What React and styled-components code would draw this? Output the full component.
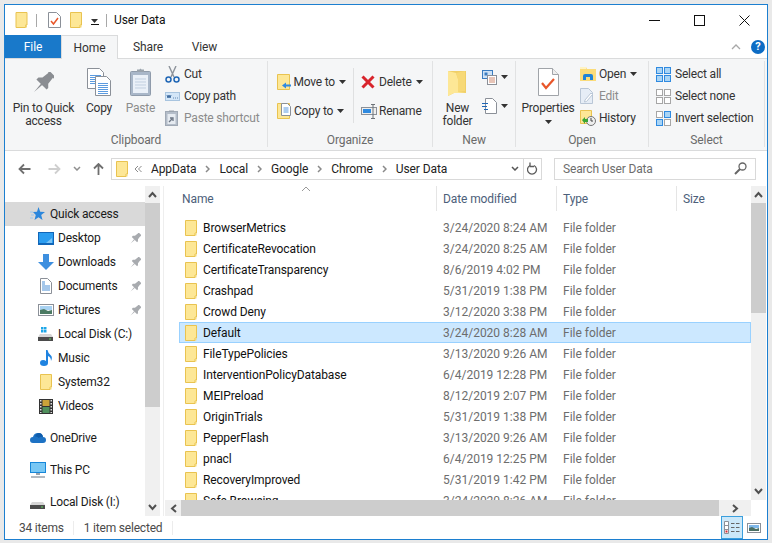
import React from 'react';
import styled, { createGlobalStyle } from 'styled-components';

const GlobalStyle = createGlobalStyle`
  html, body { margin: 0; padding: 0; background: #e9e9e9; }
  body { font-family: Roboto, "Liberation Sans", sans-serif; font-size: 12px; letter-spacing: -0.1px; color: #1a1a1a; }
  * { box-sizing: border-box; }
`;

const Svg = ({ w, h, vb, children }) => (
  <svg width={w} height={h} viewBox={vb || `0 0 ${w} ${h}`} style={{ display: 'block', flex: 'none' }}>
    {children}
  </svg>
);

const Folder = ({ w = 12, h = 16 }) => (
  <Svg w={w} h={h} vb="0 0 12 16">
    <path d="M.5.5h11v12.5H10v2.5H.5z" fill="#fde796" stroke="#e9c350" />
    <path d="M10 13h1.5v2.5H10z" fill="#f3d777" />
  </Svg>
);

const Caret = () => (
  <Svg w={7} h={4}>
    <path d="M0 0h7L3.5 4z" fill="#333" />
  </Svg>
);

const Pushpin = ({ size, color }) => (
  <Svg w={size} h={size} vb="0 0 22 22">
    <g transform="rotate(45 11 11)" fill={color}>
      <path d="M6 -2h10v2.500h-1.500l1 8 3 3v2.500H3.500V11l3-3 1-8H6z" />
      <path d="M10 13.500h2L11 25z" />
    </g>
  </Svg>
);

const Page = ({ x, y, w = 16, h = 20, lines = 5 }) => (
  <g>
    <path d={`M${x + .5} ${y + .5}h${w - 5}l4 4v${h - 5}h-${w - 1}z`} fill="#fff" stroke="#8b9098" />
    {Array.from({ length: lines }).map((_, i) => (
      <path key={i} d={`M${x + 3} ${y + 7.5 + i * 2}h${w - 6}`} stroke="#5b9be0" />
    ))}
  </g>
);

const CopyBig = () => (
  <Svg w={24} h={28}>
    <Page x={0} y={0} w={17} h={21} />
    <Page x={8} y={8} w={16} h={20} lines={6} />
  </Svg>
);

const PasteBig = () => (
  <Svg w={21} h={28}>
    <rect x=".5" y="3.5" width="20" height="24" rx="1" fill="#a9b7c9" stroke="#8f9bab" />
    <rect x="3" y="7" width="15" height="18" fill="#eaf0f8" />
    <path d="M5 11h11M5 14h11M5 17h11M5 20h11" stroke="#c1cfe0" />
    <path d="M7 4V1.5h2.5L10.500.5l1 1H14V4z" fill="#9aa3ad" />
  </Svg>
);

const Scissors = () => (
  <Svg w={15} h={17}>
    <path d="M4 0l5 11M11 0L6 11" stroke="#8d939b" strokeWidth="1.4" fill="none" />
    <circle cx="3.500" cy="13.500" r="2.500" fill="none" stroke="#1f66b5" strokeWidth="1.5" />
    <circle cx="11.500" cy="13.500" r="2.500" fill="none" stroke="#1f66b5" strokeWidth="1.5" />
  </Svg>
);

const CopyPath = () => (
  <Svg w={15} h={9}>
    <rect x=".5" y=".5" width="14" height="8" fill="#d3e6f8" stroke="#a8c4df" />
    <path d="M2 3l1 3 1-3 1 3 1-3M8 6h.8M10 6h.8M12 6h.8" stroke="#1d4f8a" strokeWidth=".8" fill="none" />
  </Svg>
);

const PasteShortcut = () => (
  <Svg w={13} h={16}>
    <rect x=".5" y="1.500" width="12" height="14" fill="#b4bdc9" stroke="#a0a9b5" />
    <rect x="2.500" y="4" width="8" height="10" fill="#e6ebf1" />
    <path d="M4 12l3-3M5 8h3v3" stroke="#6c7684" strokeWidth="1.3" fill="none" />
    <path d="M4 2V.5h5V2z" fill="#9aa3ad" />
  </Svg>
);

const MoveTo = () => (
  <Svg w={14} h={16}>
    <path d="M.5.5h12v15H.5z" fill="#fde796" stroke="#e9c350" />
    <path d="M5 11.500l4-3v2h5v2H9v2z" fill="#2f8ae0" />
  </Svg>
);

const CopyTo = () => (
  <Svg w={14} h={16}>
    <path d="M.5.5h12v15H.5z" fill="#fde796" stroke="#e9c350" />
    <path d="M4.500.5h6l3 3v9h-9z" fill="#fff" stroke="#8b9098" />
    <path d="M6.500 5h5M6.500 7h5M6.500 9h5" stroke="#5b9be0" />
  </Svg>
);

const DeleteX = () => (
  <Svg w={14} h={14}>
    <path d="M1.500 1.500l11 11M12.500 1.500l-11 11" stroke="#d8242c" strokeWidth="3" />
  </Svg>
);

const Rename = () => (
  <Svg w={16} h={15}>
    <rect x=".5" y="3.500" width="15" height="7" fill="#eee" stroke="#8b9098" />
    <rect x="2" y="5" width="8" height="4" fill="#2f8ae0" />
    <path d="M12 .5v14M10 .5h4M10 14.500h4" stroke="#6d7278" />
  </Svg>
);

const NewFolderBig = () => (
  <Svg w={19} h={27}>
    <path d="M0 1h18v22H6l-6 3z" fill="#f0cf68" />
    <path d="M0 1l8 2 2 6v13l8 1H6l-6 3z" fill="#fde796" />
    <path d="M8 3l9-2v20l-7 1V9z" fill="#f7d977" />
  </Svg>
);

const NewItem = () => (
  <Svg w={15} h={15}>
    <rect x=".5" y=".5" width="10" height="8" fill="#cfe2f6" stroke="#3a7cc0" />
    <rect x="2.500" y="2.500" width="3" height="3" fill="#3a7cc0" />
    <rect x="5.500" y="5.500" width="9" height="9" fill="#fff" stroke="#8b9098" />
    <path d="M7 8h6M7 10h6M7 12h6" stroke="#d08a70" />
  </Svg>
);

const EasyAccess = () => (
  <Svg w={15} h={16}>
    <path d="M3.500.5h7l4 4v11h-11z" fill="#fff" stroke="#8b9098" />
    <path d="M0 5.500h6M0 8.500h5M2 11.500h4" stroke="#1f66b5" />
  </Svg>
);

const PropertiesBig = () => (
  <Svg w={21} h={28}>
    <path d="M.5.500h14l6 6v21H.5z" fill="#fff" stroke="#a0a4a9" />
    <path d="M14.500.500v6h6" fill="#eee" stroke="#a0a4a9" />
    <path d="M4 15l4 5 8-9" stroke="#e8562a" strokeWidth="2.200" fill="none" />
  </Svg>
);

const OpenIcon = () => (
  <Svg w={16} h={14}>
    <path d="M0 0h6l1 2h9v12H0z" fill="#fbdc7a" />
    <path d="M0 0h6v2H0z" fill="#fff3c4" />
    <path d="M3 13V9q0-2 2-2h6q2 0 2 2v4h-3v-3H6v3z" fill="#1f83d8" />
  </Svg>
);

const EditIcon = () => (
  <Svg w={13} h={16}>
    <path d="M.5.500h8l4 4v11H.5z" fill="#e6edf6" stroke="#b9c6d6" />
    <path d="M5 12l6-7 1.500 1.500-6 7-2 .5z" fill="#fff" stroke="#b9c6d6" />
  </Svg>
);

const HistoryIcon = () => (
  <Svg w={16} h={16}>
    <path d="M.5.500h11v13H.5z" fill="#fde796" stroke="#e9c350" />
    <circle cx="11" cy="11" r="4.500" fill="#eee" stroke="#777" />
    <path d="M11 8v3h2" stroke="#444" fill="none" />
    <path d="M2 10l3-3v2h3v3H5v2z" fill="#3aa535" />
  </Svg>
);

const Squares = ({ on }) => (
  <Svg w={15} h={15}>
    {[[0, 0], [8, 0], [0, 8], [8, 8]].map(([x, y], i) => (
      <rect
        key={i}
        x={x + .5}
        y={y + .5}
        width="6"
        height="6"
        fill={on[i] ? '#a9d4f5' : '#fff'}
        stroke={on[i] ? '#2f8ae0' : '#a6a6a6'}
      />
    ))}
  </Svg>
);

const Star = () => (
  <Svg w={15} h={14}>
    <path d="M8.500 0l1.700 4.800 4.800.2-3.800 3 1.300 5-4-2.800-4 2.800 1.300-5L3 5l4-.200z" fill="#2a86dc" />
    <path d="M0 5h3M1 8h3M0 11h3" stroke="#9cc8ee" />
  </Svg>
);

const Desktop = () => (
  <Svg w={16} h={13}>
    <rect width="16" height="13" fill="#1166b8" />
    <rect x="1" y="1" width="14" height="10" fill="#2b9df0" />
    <path d="M8 11l6-5v5z" fill="#7cc4f5" />
  </Svg>
);

const Downloads = () => (
  <Svg w={16} h={16}>
    <path d="M5 0h6v8h5l-8 8-8-8h5z" fill="#3d8fdf" />
  </Svg>
);

const Documents = () => (
  <Svg w={12} h={16}>
    <path d="M.5.500h7l4 4v11H.5z" fill="#fff" stroke="#8b9098" />
    <path d="M2 6h3M2 8h8M2 10h8M2 12h8M2 4h3" stroke="#4a8fd6" />
  </Svg>
);

const Pictures = () => (
  <Svg w={16} h={12}>
    <rect x=".5" y=".5" width="15" height="11" fill="#fff" stroke="#8b9098" />
    <rect x="2" y="2" width="12" height="4" fill="#a8d2f2" />
    <path d="M2 6l4-1 4 2 4-1v4H2z" fill="#4b7a63" />
  </Svg>
);

const Disk = ({ win }) => (
  <Svg w={15} h={15}>
    {win && <path d="M3 0h2.500v2.500H3zM6 0h2.500v2.500H6zM3 3h2.500v2.500H3zM6 3h2.500v2.500H6z" fill="#1ea7e8" />}
    <path d="M2 7h11l2 3v4H0v-4z" fill="#d6d6d6" />
    <rect y="10" width="15" height="4" fill="#4b4b4b" />
    <rect x="11" y="11.500" width="2" height="1" fill="#5fd35f" />
  </Svg>
);

const Music = () => (
  <Svg w={12} h={16}>
    <path d="M6 0h1.500q.5 3 3 5t.5 6q0-4-3-5v7q0 3-4 3T0 13q0-3 3-3 2 0 3 1z" fill="#1f83e0" />
  </Svg>
);

const Film = () => (
  <Svg w={14} h={15}>
    <rect width="14" height="15" fill="#333" />
    <path d="M1 1h1.500v1.500H1zM1 4h1.500v1.500H1zM1 7h1.500v1.500H1zM1 10h1.500v1.500H1zM1 13h1.500v1H1zM11.500 1H13v1.500h-1.500zM11.500 4H13v1.500h-1.500zM11.500 7H13v1.500h-1.500zM11.500 10H13v1.500h-1.500zM11.500 13H13v1h-1.500z" fill="#ddd" />
    <rect x="3.500" y="1" width="7" height="6" fill="#c9a23a" />
    <rect x="3.500" y="8" width="7" height="6" fill="#4f8f5c" />
  </Svg>
);

const Cloud = () => (
  <Svg w={16} h={10}>
    <path d="M3 10q-3 0-3-3t3-3q1-4 5-4t5 4q3 0 3 3t-3 3z" fill="#1d72c4" />
    <path d="M5 3.500Q6.500 0 9 0q3.500 0 4 4-3-1-4 1-2-2-4-1.500z" fill="#0f5cab" />
  </Svg>
);

const Monitor = () => (
  <Svg w={16} h={16}>
    <rect width="16" height="11" fill="#1787d9" />
    <rect x="1" y="1" width="14" height="9" fill="#78c7f4" />
    <path d="M6 11h4v2H6z" fill="#9aa3ad" />
    <path d="M1 15h14" stroke="#9aa3ad" strokeWidth="1.500" />
  </Svg>
);

const Arrow = ({ dir, color }) => (
  <Svg w={13} h={12}>
    <g transform={dir === 'right' ? 'rotate(180 6.500 6)' : dir === 'up' ? 'rotate(90 6.500 6)' : undefined}>
      <path d="M12.500 6H1.500M6 1.500L1.500 6 6 10.500" stroke={color} strokeWidth="1.800" fill="none" />
    </g>
  </Svg>
);

const Chev = ({ d = 'M1 1l3 3-3 3', color = '#8a8a8a', w = 5, h = 8, sw = 1.500 }) => (
  <Svg w={w} h={h}>
    <path d={d} stroke={color} strokeWidth={sw} fill="none" />
  </Svg>
);

const Refresh = () => (
  <Svg w={11} h={13}>
    <path d="M3 3.500a4.500 4.500 0 1 0 4 0" stroke="#5c5c5c" strokeWidth="1.300" fill="none" />
    <path d="M3 .5v4h4" stroke="#5c5c5c" strokeWidth="1.300" fill="none" />
  </Svg>
);

const Magnifier = () => (
  <Svg w={13} h={13}>
    <circle cx="8.500" cy="4.500" r="3.500" stroke="#666" strokeWidth="1.300" fill="none" />
    <path d="M6 7l-5 5" stroke="#666" strokeWidth="2" />
  </Svg>
);

const ScrollArrow = ({ d }) => (
  <Svg w={9} h={7}>
    <path d={d} stroke="#505050" strokeWidth="2" fill="none" />
  </Svg>
);

const PropertiesSmall = () => (
  <Svg w={13} h={16}>
    <path d="M.5.500h8l4 4v11H.5z" fill="#fff" stroke="#8b9098" />
    <path d="M3 9l2.500 3L10 6" stroke="#e8562a" strokeWidth="1.500" fill="none" />
  </Svg>
);

const ThumbView = () => (
  <Svg w={14} h={10}>
    <rect x=".5" y=".5" width="13" height="9" fill="#fff" stroke="#8b9098" />
    <rect x="2" y="2" width="10" height="3" fill="#7fb8ea" />
    <path d="M2 5l3-1 4 2 3-1v3H2z" fill="#4b6f63" />
  </Svg>
);

const Window = styled.div`
  margin: 4px 0 0 4px;
  width: 764px;
  height: 536px;
  border: 1px solid #1c7fd0;
  background: #fff;
  display: flex;
  flex-direction: column;
  overflow: hidden;
`;

const TitleBar = styled.div`
  height: 30px;
  display: flex;
  align-items: center;
  padding-left: 10px;
`;

const TitleSep = styled.div`
  width: 1px;
  height: 13px;
  background: #a8a8a8;
  margin: 0 ${(p) => p.$right}px 0 ${(p) => p.$left}px;
`;

const TitleGap = styled.div`
  width: 9px;
`;

const QuickCaret = styled.div`
  width: 8px;
  height: 9px;
  margin-left: 9px;
  border-bottom: 1px solid #111;
  display: flex;
  align-items: flex-end;
  padding-bottom: 1px;
`;

const WindowTitle = styled.span`
  margin-right: auto;
  color: #111;
`;

const WinButton = styled.div`
  width: 45px;
  height: 30px;
  display: flex;
  align-items: center;
  justify-content: center;
`;

const TabBar = styled.div`
  height: 24px;
  display: flex;
  align-items: stretch;
  border-bottom: 1px solid #dadbdc;
`;

const FileTab = styled.div`
  width: 56px;
  background: #1979ca;
  color: #fff;
  display: flex;
  align-items: center;
  justify-content: center;
`;

const Tab = styled.div`
  width: ${(p) => p.$w}px;
  display: flex;
  align-items: center;
  justify-content: center;
  color: #333;
  position: relative;
  ${(p) => p.$active && `
    background: #f5f6f7;
    border: 1px solid #dadbdc;
    border-bottom: none;
    height: 24px;
    margin-bottom: -1px;
  `}
`;

const TabTools = styled.div`
  margin-left: auto;
  display: flex;
  align-items: center;
  gap: 10px;
  padding-right: 2px;
`;

const HelpDot = styled.div`
  width: 14px;
  height: 14px;
  border-radius: 50%;
  background: #0d6cc4;
  color: #fff;
  font-size: 11px;
  font-weight: 700;
  display: flex;
  align-items: center;
  justify-content: center;
`;

const Ribbon = styled.div`
  height: 92px;
  background: #f5f6f7;
  border-bottom: 1px solid #dadbdc;
  padding-top: 2px;
  display: flex;
  flex: none;
`;

const GroupBox = styled.div`
  width: ${(p) => p.$w}px;
  height: 86px;
  border-right: 1px solid #e1e2e3;
  display: flex;
  flex-direction: column;
`;

const GroupBody = styled.div`
  height: 74px;
  display: flex;
  padding-left: ${(p) => p.$pad || 0}px;
`;

const GroupLabel = styled.div`
  text-align: center;
  color: #6a6a6a;
  line-height: 13px;
  padding-top: 1px;
`;

const BigButton = styled.div`
  width: ${(p) => p.$w}px;
  padding-top: 7px;
  display: flex;
  flex-direction: column;
  align-items: center;
  text-align: center;
  line-height: 13px;
  letter-spacing: -0.2px;
  color: ${(p) => (p.$off ? '#8c8c8c' : '#333')};
`;

const BigIcon = styled.div`
  height: 34px;
  padding-top: ${(p) => p.$top || 0}px;
  display: flex;
  justify-content: center;
`;

const PropCaret = styled.div`
  margin-top: 5px;
`;

const SmallColumn = styled.div`
  width: ${(p) => (p.$w ? `${p.$w}px` : 'auto')};
  display: flex;
  flex-direction: column;
  gap: ${(p) => p.$gap || 0}px;
  padding-top: ${(p) => p.$top || 2}px;
`;

const SmallButton = styled.div`
  height: 22px;
  display: flex;
  align-items: center;
  color: ${(p) => (p.$off ? '#8c8c8c' : '#333')};
  white-space: nowrap;
  letter-spacing: -0.2px;
`;

const SmallIcon = styled.div`
  width: ${(p) => p.$w || 19}px;
  display: flex;
  align-items: center;
  justify-content: flex-start;
`;

const CaretGap = styled.span`
  margin-left: 4px;
  display: inline-flex;
`;

const GroupRule = styled.div`
  width: 1px;
  height: 55px;
  background: #dfe0e1;
  margin: 7px 7px 0 7px;
`;

const NavBar = styled.div`
  height: 35px;
  display: flex;
  align-items: center;
  flex: none;
`;

const NavButton = styled.div`
  width: ${(p) => p.$w}px;
  display: flex;
  justify-content: center;
`;

const AddressBox = styled.div`
  width: 431px;
  height: 22px;
  margin-left: 4px;
  border: 1px solid #d9d9d9;
  display: flex;
  align-items: center;
  padding-left: 4px;
`;

const Crumbs = styled.div`
  display: flex;
  align-items: center;
  gap: 9px;
  margin-left: 6px;
  color: #222;
  flex: 1;
`;

const AddressTail = styled.div`
  display: flex;
  align-items: center;
  height: 100%;
`;

const RefreshBox = styled.div`
  width: 18px;
  height: 100%;
  margin-left: 4px;
  border-left: 1px solid #d9d9d9;
  display: flex;
  align-items: center;
  justify-content: center;
`;

const SearchBox = styled.div`
  width: 202px;
  height: 22px;
  margin-left: 12px;
  border: 1px solid #d9d9d9;
  display: flex;
  align-items: center;
  justify-content: space-between;
  padding: 0 8px;
  color: #6d6d6d;
  letter-spacing: -0.15px;
`;

const Main = styled.div`
  height: 330px;
  display: flex;
  flex: none;
`;

const NavPane = styled.div`
  width: 140px;
  padding-top: 16px;
  overflow: hidden;
  letter-spacing: -0.2px;
`;

const TreeRow = styled.div`
  height: 24px;
  margin-top: ${(p) => p.$top || 0}px;
  display: flex;
  align-items: center;
  padding-left: ${(p) => (p.$child ? 32 : 24)}px;
  background: ${(p) => (p.$hover ? '#d9d9d9' : 'transparent')};
  color: #1a1a1a;
  white-space: nowrap;
`;

const TreeIcon = styled.div`
  width: 21px;
  display: flex;
  justify-content: center;
  padding-right: 4px;
`;

const TreePin = styled.div`
  margin-left: auto;
  padding-right: 4px;
`;

const VScroll = styled.div`
  width: 15px;
  flex: none;
  height: ${(p) => p.$h}px;
  background: #f0f0f0;
  display: flex;
  flex-direction: column;
`;

const ScrollEnd = styled.div`
  height: 17px;
  display: flex;
  align-items: center;
  justify-content: center;
  flex: none;
  margin-top: ${(p) => (p.$bottom ? 'auto' : 0)};
`;

const VThumb = styled.div`
  height: ${(p) => p.$h}px;
  background: #cdcdcd;
`;

const PaneGap = styled.div`
  width: 5px;
  padding-left: 3px;
  &::after {
    content: '';
    display: block;
    width: 1px;
    height: 100%;
    background: #eeeeee;
  }
`;

const ListPane = styled.div`
  width: 601px;
  display: flex;
  flex-direction: column;
`;

const ListArea = styled.div`
  height: 314px;
  display: flex;
`;

const Content = styled.div`
  width: 586px;
  height: 314px;
  overflow: hidden;
  position: relative;
`;

const Header = styled.div`
  height: 25px;
  display: flex;
`;

const HeaderCell = styled.div`
  width: ${(p) => p.$w}px;
  padding-left: ${(p) => p.$pad}px;
  display: flex;
  align-items: center;
  color: #4c607a;
  border-right: ${(p) => (p.$last ? 'none' : '1px solid #e5e5e5')};
`;

const SortMark = styled.div`
  position: absolute;
  left: 136px;
  top: 0;
`;

const Rows = styled.div`
  padding: 6px 0 0 14px;
`;

const Row = styled.div`
  height: 21px;
  display: grid;
  grid-template-columns: 258px 120px 120px;
  align-items: center;
  padding-left: 6px;
  background: ${(p) => (p.$selected ? '#cce8ff' : 'transparent')};
  box-shadow: ${(p) => (p.$selected ? 'inset 0 0 0 1px #99d1ff' : 'none')};
`;

const NameCell = styled.div`
  display: flex;
  align-items: center;
  gap: 6px;
  color: #111;
`;

const SubCell = styled.div`
  color: #6d6d6d;
  letter-spacing: 0;
`;

const HScroll = styled.div`
  height: 16px;
  display: flex;
`;

const HEnd = styled.div`
  width: ${(p) => p.$w}px;
  background: #f0f0f0;
  display: flex;
  align-items: center;
  justify-content: center;
`;

const HThumb = styled.div`
  width: 538px;
  background: #cdcdcd;
`;

const StatusBar = styled.div`
  height: 23px;
  display: flex;
  align-items: center;
  padding-left: 14px;
  color: #4a4a4a;
  letter-spacing: -0.2px;
`;

const StatusSep = styled.div`
  width: 1px;
  height: 14px;
  background: #ececec;
  margin: 0 ${(p) => p.$right}px 0 ${(p) => p.$left}px;
`;

const ViewButton = styled.div`
  width: 22px;
  height: 23px;
  margin-left: auto;
  background: #cce8f9;
  border: 1px solid #3b9fdd;
  display: flex;
  align-items: center;
  justify-content: center;
`;

const ViewThumb = styled.div`
  margin: 0 6px 0 4px;
`;

const Group = ({ w, label, pad, children }) => (
  <GroupBox $w={w}>
    <GroupBody $pad={pad}>{children}</GroupBody>
    <GroupLabel>{label}</GroupLabel>
  </GroupBox>
);

const Small = ({ icon, label, off, caret, iconW }) => (
  <SmallButton $off={off}>
    <SmallIcon $w={iconW}>{icon}</SmallIcon>
    {label}
    {caret && (
      <CaretGap>
        <Caret />
      </CaretGap>
    )}
  </SmallButton>
);

const tree = [
  ['Desktop', <Desktop />, true],
  ['Downloads', <Downloads />, true],
  ['Documents', <Documents />, true],
  ['Pictures', <Pictures />, true],
  ['Local Disk (C:)', <Disk win />],
  ['Music', <Music />],
  ['System32', <Folder />],
  ['Videos', <Film />],
];

const files = [
  ['BrowserMetrics', '3/24/2020 8:24 AM'],
  ['CertificateRevocation', '3/24/2020 8:25 AM'],
  ['CertificateTransparency', '8/6/2019 4:02 PM'],
  ['Crashpad', '5/31/2019 1:38 PM'],
  ['Crowd Deny', '3/12/2020 3:38 PM'],
  ['Default', '3/24/2020 8:28 AM'],
  ['FileTypePolicies', '3/13/2020 9:26 AM'],
  ['InterventionPolicyDatabase', '6/4/2019 12:28 PM'],
  ['MEIPreload', '8/12/2019 2:07 PM'],
  ['OriginTrials', '5/31/2019 1:38 PM'],
  ['PepperFlash', '3/13/2020 9:26 AM'],
  ['pnacl', '6/4/2019 12:25 PM'],
  ['RecoveryImproved', '5/31/2019 1:42 PM'],
  ['Safe Browsing', '3/24/2020 8:26 AM'],
];

const crumbs = ['AppData', 'Local', 'Google', 'Chrome', 'User Data'];

export default function App() {
  return (
    <>
      <GlobalStyle />
      <Window>
        <TitleBar>
          <Folder w={13} h={16} />
          <TitleSep $left={8} $right={11} />
          <PropertiesSmall />
          <TitleGap />
          <Folder w={12} h={16} />
          <QuickCaret>
            <Caret />
          </QuickCaret>
          <TitleSep $left={7} $right={7} />
          <WindowTitle>User Data</WindowTitle>
          <WinButton>
            <Svg w={11} h={11}>
              <path d="M0 5.500h11" stroke="#111" />
            </Svg>
          </WinButton>
          <WinButton>
            <Svg w={11} h={11}>
              <rect x=".5" y=".5" width="10" height="10" fill="none" stroke="#111" />
            </Svg>
          </WinButton>
          <WinButton>
            <Svg w={11} h={11}>
              <path d="M.5.500l10 10M10.500.500l-10 10" stroke="#111" />
            </Svg>
          </WinButton>
        </TitleBar>
        <TabBar>
          <FileTab>File</FileTab>
          <Tab $w={57} $active>Home</Tab>
          <Tab $w={60}>Share</Tab>
          <Tab $w={53}>View</Tab>
          <TabTools>
            <Chev w={10} h={6} d="M1 5l4-4 4 4" color="#a8a8a8" sw={1.300} />
            <HelpDot>?</HelpDot>
          </TabTools>
        </TabBar>
        <Ribbon>
          <Group w={263} label="Clipboard">
            <BigButton $w={77}>
              <BigIcon $top={4}><Pushpin size={21} color="#8a8d92" /></BigIcon>
              Pin to Quick access
            </BigButton>
            <BigButton $w={34}>
              <BigIcon><CopyBig /></BigIcon>
              Copy
            </BigButton>
            <BigButton $w={49} $off>
              <BigIcon><PasteBig /></BigIcon>
              Paste
            </BigButton>
            <SmallColumn>
              <Small icon={<Scissors />} label="Cut" />
              <Small icon={<CopyPath />} label="Copy path" />
              <Small off icon={<PasteShortcut />} label="Paste shortcut" />
            </SmallColumn>
          </Group>
          <Group w={165} label="Organize" pad={9}>
            <SmallColumn $w={69} $gap={7} $top={10}>
              <Small iconW={17} icon={<MoveTo />} label="Move to" caret />
              <Small iconW={17} icon={<CopyTo />} label="Copy to" caret />
            </SmallColumn>
            <GroupRule />
            <SmallColumn $gap={7} $top={10}>
              <Small iconW={18} icon={<DeleteX />} label="Delete" caret />
              <Small iconW={18} icon={<Rename />} label="Rename" />
            </SmallColumn>
          </Group>
          <Group w={83} label="New">
            <BigButton $w={49}>
              <BigIcon $top={2}><NewFolderBig /></BigIcon>
              New folder
            </BigButton>
            <SmallColumn $gap={7} $top={5}>
              <SmallButton>
                <NewItem />
                <CaretGap><Caret /></CaretGap>
              </SmallButton>
              <SmallButton>
                <EasyAccess />
                <CaretGap><Caret /></CaretGap>
              </SmallButton>
            </SmallColumn>
          </Group>
          <Group w={133} label="Open">
            <BigButton $w={64}>
              <BigIcon><PropertiesBig /></BigIcon>
              Properties
              <PropCaret><Caret /></PropCaret>
            </BigButton>
            <SmallColumn>
              <Small icon={<OpenIcon />} label="Open" caret />
              <Small off icon={<EditIcon />} label="Edit" />
              <Small icon={<HistoryIcon />} label="History" />
            </SmallColumn>
          </Group>
          <Group w={116} label="Select" pad={7}>
            <SmallColumn>
              <Small icon={<Squares on={[1, 1, 1, 1]} />} label="Select all" />
              <Small icon={<Squares on={[0, 0, 0, 0]} />} label="Select none" />
              <Small icon={<Squares on={[0, 1, 1, 0]} />} label="Invert selection" />
            </SmallColumn>
          </Group>
        </Ribbon>
        <NavBar>
          <NavButton $w={38}><Arrow color="#6f6f6f" /></NavButton>
          <NavButton $w={22}><Arrow dir="right" color="#cfcfcf" /></NavButton>
          <NavButton $w={24}>
            <Chev w={8} h={5} d="M1 1l3 3 3-3" color="#8f8f8f" />
          </NavButton>
          <NavButton $w={18}><Arrow dir="up" color="#6f6f6f" /></NavButton>
          <AddressBox>
            <Folder w={12} h={16} />
            <Crumbs>
              <Chev w={8} h={8} d="M4 1L1 4l3 3M7.500 1l-3 3 3 3" sw={1} />
              {crumbs.map((c, i) => (
                <React.Fragment key={c}>
                  {i > 0 && <Chev />}
                  <span>{c}</span>
                </React.Fragment>
              ))}
            </Crumbs>
            <AddressTail>
              <Chev w={8} h={5} d="M1 1l3 3 3-3" color="#555" />
              <RefreshBox><Refresh /></RefreshBox>
            </AddressTail>
          </AddressBox>
          <SearchBox>
            Search User Data
            <Magnifier />
          </SearchBox>
        </NavBar>
        <Main>
          <NavPane>
            <TreeRow $hover>
              <TreeIcon><Star /></TreeIcon>
              Quick access
            </TreeRow>
            {tree.map(([label, icon, pinned]) => (
              <TreeRow key={label} $child>
                <TreeIcon>{icon}</TreeIcon>
                {label}
                {pinned && <TreePin><Pushpin size={11} color="#a8abaf" /></TreePin>}
              </TreeRow>
            ))}
            <TreeRow $top={8}>
              <TreeIcon><Cloud /></TreeIcon>
              OneDrive
            </TreeRow>
            <TreeRow $top={8}>
              <TreeIcon><Monitor /></TreeIcon>
              This PC
            </TreeRow>
            <TreeRow $top={8}>
              <TreeIcon><Disk /></TreeIcon>
              Local Disk (I:)
            </TreeRow>
          </NavPane>
          <VScroll $h={330}>
            <ScrollEnd><ScrollArrow d="M1 6l3.500-4L8 6" /></ScrollEnd>
            <VThumb $h={204} />
            <ScrollEnd $bottom><ScrollArrow d="M1 1l3.500 4L8 1" /></ScrollEnd>
          </VScroll>
          <PaneGap />
          <ListPane>
            <ListArea>
              <Content>
                <Header>
                  <HeaderCell $w={272} $pad={17}>Name</HeaderCell>
                  <HeaderCell $w={120} $pad={6}>Date modified</HeaderCell>
                  <HeaderCell $w={120} $pad={6}>Type</HeaderCell>
                  <HeaderCell $w={74} $pad={6} $last>Size</HeaderCell>
                </Header>
                <SortMark>
                  <Chev w={10} h={6} d="M1 5l4-4 4 4" color="#9a9a9a" sw={1} />
                </SortMark>
                <Rows>
                  {files.map(([name, date]) => (
                    <Row key={name} $selected={name === 'Default'}>
                      <NameCell>
                        <Folder />
                        {name}
                      </NameCell>
                      <SubCell>{date}</SubCell>
                      <SubCell>File folder</SubCell>
                    </Row>
                  ))}
                </Rows>
              </Content>
              <VScroll $h={314}>
                <ScrollEnd><ScrollArrow d="M1 6l3.500-4L8 6" /></ScrollEnd>
                <VThumb $h={110} />
                <ScrollEnd $bottom><ScrollArrow d="M1 1l3.500 4L8 1" /></ScrollEnd>
              </VScroll>
            </ListArea>
            <HScroll>
              <HEnd $w={16}>
                <Svg w={7} h={9}><path d="M6 1L2 4.500 6 8" stroke="#505050" strokeWidth="2" fill="none" /></Svg>
              </HEnd>
              <HThumb />
              <HEnd $w={32}>
                <Svg w={7} h={9}><path d="M1 1l4 3.500L1 8" stroke="#505050" strokeWidth="2" fill="none" /></Svg>
              </HEnd>
            </HScroll>
          </ListPane>
        </Main>
        <StatusBar>
          34 items
          <StatusSep $left={9} $right={10} />
          1 item selected
          <StatusSep $left={10} $right={0} />
          <ViewButton>
            <Svg w={16} h={13}>
              <path d="M.5.500h4v12h-4z" fill="#fff" stroke="#8b9098" />
              <path d="M.5 4.500h4M.5 8.500h4" stroke="#8b9098" />
              <rect x="1.500" y="9.500" width="2" height="2" fill="#d8242c" />
              <path d="M7 2.500h3.500M12 2.500h3.500M7 6.500h3.500M12 6.500h3.500M7 10.500h3.500M12 10.500h3.500" stroke="#666" />
            </Svg>
          </ViewButton>
          <ViewThumb><ThumbView /></ViewThumb>
        </StatusBar>
      </Window>
    </>
  );
}
